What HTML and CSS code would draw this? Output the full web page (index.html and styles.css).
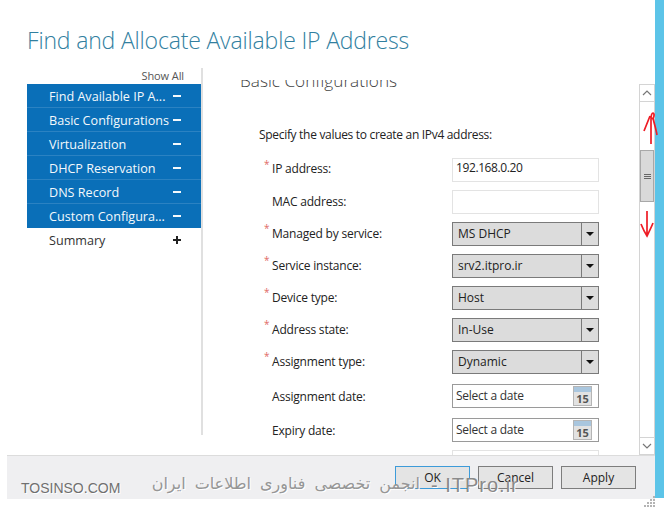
FILE: index.html
```
<!DOCTYPE html>
<html lang="en">
<head>
<meta charset="utf-8">
<title>Find and Allocate Available IP Address</title>
<link rel="stylesheet" href="styles.css">
</head>
<body>
<div class="window">
  <div class="dialog">
    <h1 class="title">Find and Allocate Available IP Address</h1>
    <div class="main">
      <nav class="nav">
        <div class="show-all">Show All</div>
        <div class="nav-item active"><span>Find Available IP A...</span><b class="sign minus"></b></div>
        <div class="nav-item active"><span>Basic Configurations</span><b class="sign minus"></b></div>
        <div class="nav-item active"><span>Virtualization</span><b class="sign minus"></b></div>
        <div class="nav-item active"><span>DHCP Reservation</span><b class="sign minus"></b></div>
        <div class="nav-item active"><span>DNS Record</span><b class="sign minus"></b></div>
        <div class="nav-item active"><span>Custom Configura...</span><b class="sign minus"></b></div>
        <div class="nav-item"><span>Summary</span><b class="sign plus"></b></div>
      </nav>
      <div class="panel">
        <div class="panel-inner">
          <h2 class="section">Basic Configurations</h2>
          <p class="intro">Specify the values to create an IPv4 address:</p>
          <div class="form">
            <label class="label req first">IP address:</label>
            <div class="input">192.168.0.20</div>
            <label class="label">MAC address:</label>
            <div class="input"></div>
            <label class="label req">Managed by service:</label>
            <div class="combo"><span>MS DHCP</span><i class="drop"></i></div>
            <label class="label req">Service instance:</label>
            <div class="combo"><span>srv2.itpro.ir</span><i class="drop"></i></div>
            <label class="label req">Device type:</label>
            <div class="combo"><span>Host</span><i class="drop"></i></div>
            <label class="label req">Address state:</label>
            <div class="combo"><span>In-Use</span><i class="drop"></i></div>
            <label class="label req">Assignment type:</label>
            <div class="combo"><span>Dynamic</span><i class="drop"></i></div>
            <label class="label date-row">Assignment date:</label>
            <div class="date date-row"><span>Select a date</span>
              <div class="cal"><div class="cal-top"></div><div class="cal-num">15</div></div>
            </div>
            <label class="label date-row">Expiry date:</label>
            <div class="date date-row"><span>Select a date</span>
              <div class="cal"><div class="cal-top"></div><div class="cal-num">15</div></div>
            </div>
            <label class="label"></label>
            <div class="input"></div>
          </div>
        </div>
      </div>
      <div class="scrollbar">
        <div class="sb-btn">
          <svg width="10" height="6" viewBox="0 0 10 6"><path d="M1 5 L5 1 L9 5" fill="none" stroke="#777" stroke-width="1.2"/></svg>
        </div>
        <div class="sb-track-top"></div>
        <div class="sb-thumb"><i></i><i></i><i></i></div>
        <div class="sb-track-bottom"></div>
        <div class="sb-btn">
          <svg width="10" height="6" viewBox="0 0 10 6"><path d="M1 1 L5 5 L9 1" fill="none" stroke="#777" stroke-width="1.2"/></svg>
        </div>
      </div>
    </div>
    <div class="footer">
      <button class="btn focus">OK</button>
      <button class="btn">Cancel</button>
      <button class="btn">Apply</button>
    </div>
  </div>
  <div class="strip"></div>
</div>

<svg class="ink ink-up" width="17" height="33" viewBox="0 0 17 33"><path d="M9 32 L9 7 C9 3 10 1 11 1 C13 2 12 7 9 7 M8 4 C6 9 4 14 2 19 M11 6 C12 11 14 17 15 23" fill="none" stroke="#ee1c25" stroke-width="1.7"/></svg>
<svg class="ink ink-down" width="14" height="28" viewBox="0 0 14 28"><path d="M7 1 L7 26 M1 14 C3 19 5 23 7 26 C9 22 11 18 13 13" fill="none" stroke="#ee1c25" stroke-width="1.7"/></svg>

<div class="wm wm-site">TOSINSO.COM</div>
<div class="wm wm-fa" dir="rtl" lang="fa">انجمن تخصصی فناوری اطلاعات ایران</div>
<div class="wm wm-it">- ITPro.ir</div>

<svg class="grip" width="12" height="12" viewBox="0 0 12 12" fill="#b4b4b4">
  <rect x="9" y="0" width="2" height="2"/><rect x="6" y="3" width="2" height="2"/><rect x="9" y="3" width="2" height="2"/>
  <rect x="3" y="6" width="2" height="2"/><rect x="6" y="6" width="2" height="2"/><rect x="9" y="6" width="2" height="2"/>
  <rect x="0" y="9" width="2" height="2"/><rect x="3" y="9" width="2" height="2"/><rect x="6" y="9" width="2" height="2"/><rect x="9" y="9" width="2" height="2"/>
</svg>
</body>
</html>
```
FILE: styles.css
```
* { box-sizing: border-box; }
html, body { margin: 0; padding: 0; background: #fff; }
body {
  width: 664px;
  height: 509px;
  overflow: hidden;
  position: relative;
  font-family: "Open Sans", "Liberation Sans", sans-serif;
  font-size: 12px;
  color: #333;
}
.window { display: flex; align-items: flex-start; }
.dialog { width: 655px; flex: none; }
.strip { width: 9px; height: 498px; background: #5cc4e8; flex: none; }

.title {
  margin: 0;
  height: 68px;
  padding: 24px 0 0 27px;
  font-size: 23px;
  line-height: 32px;
  font-weight: 300;
  letter-spacing: -0.17px;
  color: #327f9f;
  white-space: nowrap;
}
.main { display: flex; height: 387px; align-items: flex-start; }

.nav { width: 176px; margin-left: 27px; height: 367px; border-right: 2px solid #e0e0e0; flex: none; }
.show-all { height: 16px; line-height: 16px; text-align: right; padding-right: 17px; font-size: 11px; letter-spacing: -0.1px; color: #555; }
.nav-item {
  height: 24px;
  display: flex;
  align-items: center;
  justify-content: space-between;
  padding: 0 20px 0 22px;
  white-space: nowrap;
  font-size: 12.6px;
  color: #333;
}
.nav-item.active { background: #0a6fb8; color: #f4f9fc; box-shadow: inset 0 -1px 0 #2b82c2; }
.nav-item.active:nth-last-child(2) { box-shadow: none; }
.sign { width: 8px; height: 2px; background: currentColor; position: relative; flex: none; display: block; }
.plus::after { content: ""; position: absolute; left: 3px; top: -3px; width: 2px; height: 8px; background: currentColor; }
.nav-item:not(.active) .sign { background: #222; }
.nav-item:not(.active) .sign::after { background: #222; }

.panel { width: 436px; height: 375px; margin-top: 12px; overflow: hidden; flex: none; }
.panel-inner { margin-top: -11px; }
.section { margin: 0 0 0 37px; height: 24px; line-height: 24px; font-size: 17.2px; font-weight: 300; color: #444; white-space: nowrap; }
.intro { margin: 33px 0 0 56px; height: 18px; line-height: 18px; color: #222; letter-spacing: -0.31px; white-space: nowrap; }
.form {
  margin: 14px 0 0 61px;
  display: grid;
  grid-template-columns: 188px 147px;
  row-gap: 8px;
}
.label { display: block; height: 24px; line-height: 24px; padding-left: 8px; color: #222; white-space: nowrap; position: relative; letter-spacing: -0.2px; }
.label.first { line-height: 22px; }
.label.date-row { line-height: 26px; }
.label.req::before { content: "*"; position: absolute; left: 0; top: -1px; line-height: 14px; color: #e06a66; font-size: 10px; }
.input { height: 24px; border: 1px solid #e3e3e3; background: #fff; padding-left: 3px; line-height: 18px; color: #222; letter-spacing: -0.4px; }
.combo { height: 24px; display: flex; background: #dcdcdc; border: 1px solid #7a7a7a; line-height: 22px; color: #222; }
.combo span { flex: 1; padding-left: 5px; }
.drop { width: 17px; border-left: 1px solid #7a7a7a; position: relative; }
.drop::after { content: ""; position: absolute; left: 4px; top: 9px; border: 4px solid transparent; border-top: 4px solid #111; border-bottom: 0; }
.date { height: 24px; display: flex; justify-content: space-between; align-items: center; border: 1px solid #9a9a9a; background: #fff; padding: 0 6px 0 3px; color: #333; line-height: 24px; letter-spacing: -0.25px; }
.date-row { margin-top: 2px; }
.cal { width: 19px; height: 20px; border: 1px solid #b5b5b5; background: #e2e2e2; }
.cal-top { height: 5px; background: #a9c6de; }
.cal-num { font-size: 11px; line-height: 13px; text-align: center; font-weight: 700; color: #555; letter-spacing: 0; }

.scrollbar { width: 16px; height: 371px; margin-top: 16px; border: 1px solid #d4d4d4; background: #fff; display: flex; flex-direction: column; flex: none; }
.sb-btn { height: 16px; display: flex; align-items: center; justify-content: center; flex: none; }
.sb-track-top { height: 49px; border-top: 1px solid #d4d4d4; flex: none; }
.sb-thumb { height: 52px; background: #d9d9d9; border: 1px solid #a8a8a8; display: flex; flex-direction: column; align-items: center; justify-content: center; gap: 1px; flex: none; }
.sb-thumb i { display: block; width: 7px; height: 1px; background: #666; }
.sb-track-bottom { flex: 1; border-bottom: 1px solid #d4d4d4; }

.footer {
  margin-left: 7px;
  height: 44px;
  background: #efeff1;
  border-top: 1px solid #dcdcdc;
  display: flex;
  justify-content: flex-end;
  gap: 8px;
  padding: 10px 19px 0 0;
}
.btn {
  width: 75px;
  height: 23px;
  background: #e4e4e4;
  border: 1px solid #7d7d7d;
  font: inherit;
  color: #222;
  padding: 0;
}
.btn.focus { border-color: #3d9bd9; }

.ink { position: absolute; }
.ink-up { left: 642px; top: 112px; }
.ink-down { left: 640px; top: 210px; }

.wm { position: absolute; white-space: nowrap; color: #969696; text-shadow: 1px 1px 0 #fff; }
.wm-site { left: 21px; top: 480px; font-family: "Liberation Sans", sans-serif; font-size: 14px; line-height: 16px; color: #707070; }
.wm-fa { left: 145px; top: 474px; width: 275px; font-family: "DejaVu Sans", sans-serif; font-size: 16px; line-height: 20px; word-spacing: 4px; text-align: right; }
.wm-it { left: 431px; top: 472px; font-family: "Liberation Sans", sans-serif; font-size: 20px; line-height: 26px; letter-spacing: 1px; color: #8a8a8a; }
.grip { position: absolute; left: 644px; top: 496px; }
```
